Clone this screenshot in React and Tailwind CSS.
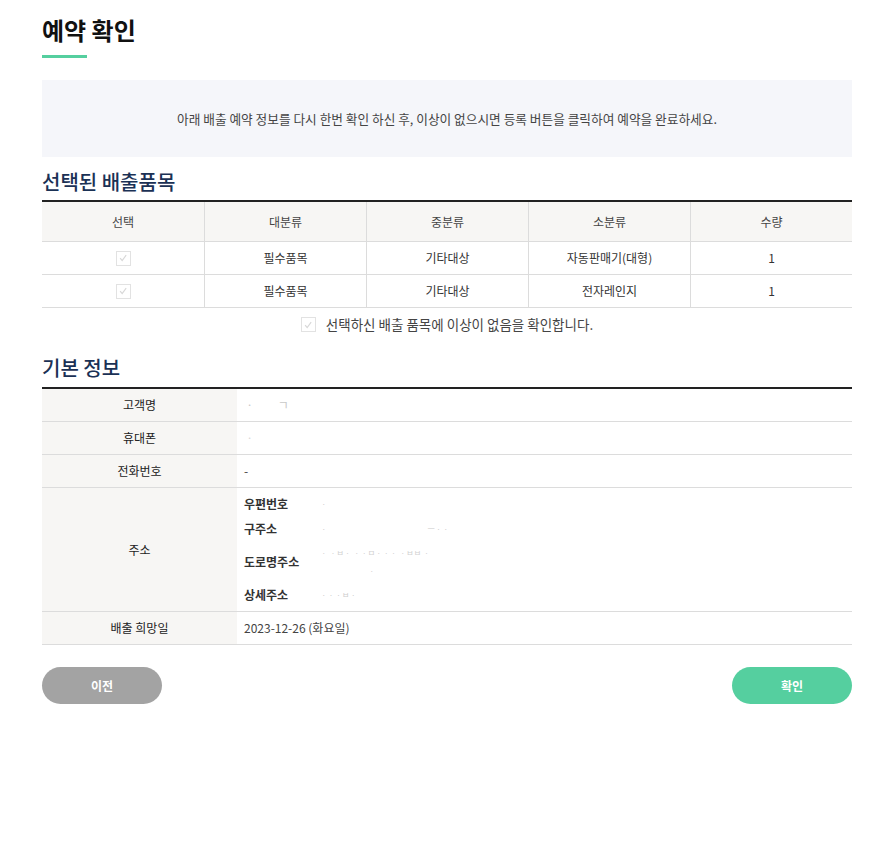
import React from 'react';

const FONT = { fontFamily: '"Noto Sans CJK KR", "Noto Sans", sans-serif' };

const ITEMS = [
  { major: '필수품목', mid: '기타대상', minor: '자동판매기(대형)', qty: 1 },
  { major: '필수품목', mid: '기타대상', minor: '전자레인지', qty: 1 },
];

function Check({ className = '' }) {
  return (
    <span className={`inline-flex items-center justify-center w-[15px] h-[15px] border border-[#e2e2e2] bg-white ${className}`}>
      <svg viewBox="0 0 12 12" className="w-[10px] h-[10px]" fill="none" stroke="#d8d8d8" strokeWidth="1.4">
        <path d="M2.5 6.2 L5 9 L9.8 2.6" />
      </svg>
    </span>
  );
}

function InfoRow({ label, children }) {
  return (
    <div className="flex border-b border-[#dcdcdc]">
      <div className="w-[195px] shrink-0 bg-[#f7f6f4] flex items-center justify-center text-[12px] text-[#222] h-[32px]">
        {label}
      </div>
      <div className="flex-1 flex items-center px-[7px] text-[12px] text-[#444]">{children}</div>
    </div>
  );
}

export default function App() {
  return (
    <div className="bg-white min-h-[857px] w-[880px]" style={FONT}>
      <div className="w-[810px] ml-[42px] pt-[14px]">
        <h1 className="text-[24px] font-bold text-[#111] leading-[32px]">예약 확인</h1>
        <div className="w-[45px] h-[3px] bg-[#55cf9f] mt-[9px]" />

        <div className="mt-[22px] h-[77px] bg-[#f5f6fa] flex items-center justify-center text-[12.7px] text-[#444]">
          아래 배출 예약 정보를 다시 한번 확인 하신 후, 이상이 없으시면 등록 버튼을 클릭하여 예약을 완료하세요.
        </div>

        <h2 className="mt-[11px] text-[20px] text-[#1b3155] font-medium leading-[28px]">선택된 배출품목</h2>

        {/* 선택 품목 테이블 */}
        <div className="mt-[4px] border-t-2 border-[#222]">
          <div className="grid grid-cols-5 bg-[#f7f6f4] h-[40px] border-b border-[#dcdcdc] text-[12px] text-[#444]">
            {['선택', '대분류', '중분류', '소분류', '수량'].map((h, i) => (
              <div key={h} className={`flex items-center justify-center ${i > 0 ? 'border-l border-[#dcdcdc]' : ''}`}>{h}</div>
            ))}
          </div>
          {ITEMS.map((it, r) => (
            <div key={r} className="grid grid-cols-5 h-[33px] border-b border-[#dcdcdc] text-[12px] text-[#333]">
              <div className="flex items-center justify-center"><Check /></div>
              <div className="flex items-center justify-center border-l border-[#dcdcdc]">{it.major}</div>
              <div className="flex items-center justify-center border-l border-[#dcdcdc]">{it.mid}</div>
              <div className="flex items-center justify-center border-l border-[#dcdcdc]">{it.minor}</div>
              <div className="flex items-center justify-center border-l border-[#dcdcdc]">{it.qty}</div>
            </div>
          ))}
        </div>

        <div className="flex items-center justify-center h-[33px] text-[13.5px] text-[#444]">
          <Check className="mr-[10px]" />
          선택하신 배출 품목에 이상이 없음을 확인합니다.
        </div>

        <h2 className="mt-[13px] text-[20px] text-[#1b3155] font-medium leading-[28px]">기본 정보</h2>

        {/* 기본 정보 */}
        <div className="mt-[5px] border-t-2 border-[#222]">
          <InfoRow label="고객명"><span className="text-[#c8c8c8] tracking-[10px]">ㆍ ㄱ</span></InfoRow>
          <InfoRow label="휴대폰"><span className="text-[#d8d8d8]">ㆍ</span></InfoRow>
          <InfoRow label="전화번호">-</InfoRow>
          <div className="flex border-b border-[#dcdcdc] h-[124px]">
            <div className="w-[195px] shrink-0 bg-[#f7f6f4] flex items-center justify-center text-[12px] text-[#222]">주소</div>
            <div className="flex-1 px-[7px] pt-[3px] text-[12px]">
              <div className="flex h-[25px] items-center">
                <span className="w-[76px] font-bold text-[#333]">우편번호</span>
                <span className="text-[#ccc] text-[8px]">ㆍ</span>
              </div>
              <div className="flex h-[25px] items-center">
                <span className="w-[76px] font-bold text-[#333]">구주소</span>
                <span className="text-[#ccc] text-[8px]">ㆍ<span className="ml-[100px]">ㅡㆍㆍ</span></span>
              </div>
              <div className="flex h-[42px] items-center">
                <span className="w-[76px] font-bold text-[#333]">도로명주소</span>
                <span className="text-[#d0d0d0] text-[8px] leading-[18px]">
                  ㆍ ㆍㅂㆍ      ㆍㆍㅁㆍㆍㆍ        ㆍㅂㅂ        ㆍ<br />
                  <span className="ml-[48px]">ㆍ</span>
                </span>
              </div>
              <div className="flex h-[24px] items-center">
                <span className="w-[76px] font-bold text-[#333]">상세주소</span>
                <span className="text-[#ccc] text-[8px]">ㆍㆍㆍㅂㆍ</span>
              </div>
            </div>
          </div>
          <InfoRow label="배출 희망일">2023-12-26 (화요일)</InfoRow>
        </div>

        <div className="flex justify-between mt-[22px]">
          <button className="w-[120px] h-[37px] rounded-full bg-[#a3a3a3] text-white text-[12px] font-bold">이전</button>
          <button className="w-[120px] h-[37px] rounded-full bg-[#55cf9f] text-white text-[12px] font-bold">확인</button>
        </div>
      </div>
    </div>
  );
}
